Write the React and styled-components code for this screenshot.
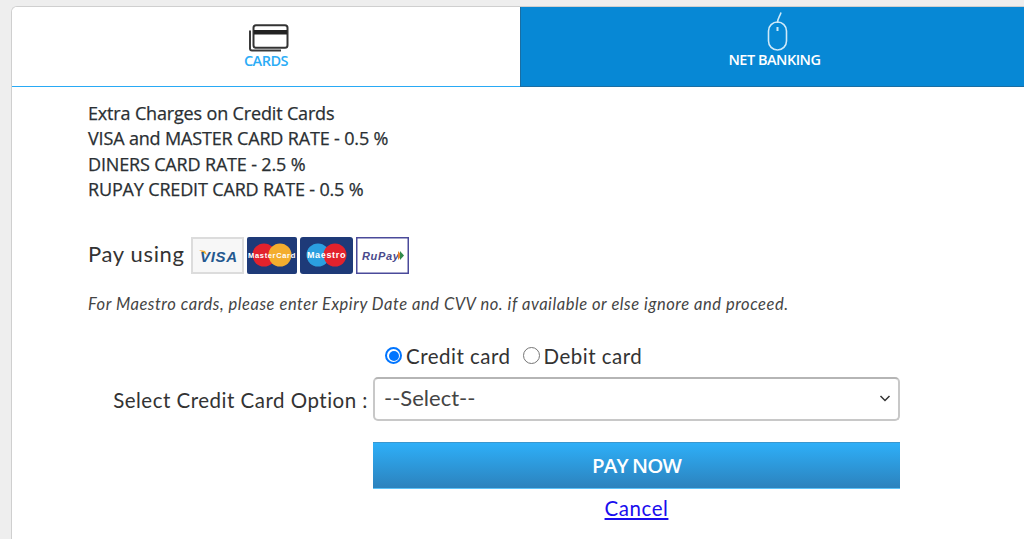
import React from "react";
import styled, { createGlobalStyle } from "styled-components";

const Global = createGlobalStyle`
  html, body { margin: 0; padding: 0; background: #eeeeee; }
  body { height: 539px; overflow: hidden; font-family: "Open Sans", sans-serif; }
`;

const Page = styled.div`
  height: 539px;
  padding: 6px 0 0 11px;
  box-sizing: border-box;
  overflow: hidden;
`;

const Card = styled.div`
  background: #fff;
  border: 1px solid #cfcfcf;
  border-right: 0;
  border-bottom: 0;
  border-top-left-radius: 6px;
  height: 540px;
  overflow: hidden;
`;

const Tabs = styled.div`
  display: grid;
  grid-template-columns: 508px 1fr;
  height: 80px;
`;

const Tab = styled.div`
  display: flex;
  flex-direction: column;
  align-items: center;
  background: ${p => (p.$active ? "#fff" : "#0788d5")};
  color: ${p => (p.$active ? "#2bacf6" : "#fff")};
  border-left: ${p => (p.$active ? "0" : "1px solid #1a6ea3")};
  border-bottom: 1px solid ${p => (p.$active ? "#29aaf5" : "#1a6ea3")};
  font-family: "Open Sans", sans-serif;
  font-weight: 600;
  font-size: 14.5px;
  letter-spacing: -0.5px;
  line-height: 18px;
  height: 80px;
  box-sizing: border-box;
  padding-top: ${p => p.$pad}px;
  padding-left: ${p => (p.$active ? 0 : 4)}px;
`;

const IconSlot = styled.div`
  height: ${p => p.$h}px;
  display: flex;
  align-items: flex-end;
  padding-left: ${p => p.$shift}px;
`;

const Content = styled.div`
  padding: 14px 0 0 76px;
  width: 812px;
`;

const Charges = styled.div`
  font-family: "Open Sans", sans-serif;
  font-weight: 500;
  font-size: 18px;
  line-height: 25.4px;
  color: #2a2f33;
  letter-spacing: -0.16px;
  -webkit-text-stroke: 0.25px #2a2f33;
`;

const PayUsing = styled.div`
  display: flex;
  align-items: center;
  gap: 5px;
  margin-top: 32px;
  height: 37px;
  font-family: "Lato", sans-serif;
  font-size: 22px;
  letter-spacing: 0.65px;
  color: #333;
`;

const Badges = styled.div`
  display: flex;
  gap: 3px;
  margin: 5px 0 0 1px;
`;

const Note = styled.div`
  margin-top: 21px;
  font-family: "Lato", sans-serif;
  font-style: italic;
  font-size: 16.5px;
  letter-spacing: 0.54px;
  line-height: 22px;
  color: #444;
`;

const Form = styled.div`
  display: grid;
  grid-template-columns: 285px 527px;
  margin-top: 28px;
`;

const RadioRow = styled.div`
  grid-column: 2;
  display: flex;
  align-items: center;
  padding-left: 12px;
  height: 26px;
  font-family: "Lato", sans-serif;
  font-size: 20.5px;
  letter-spacing: 0.5px;
  color: #333;
`;

const RadioLabel = styled.label`
  display: flex;
  align-items: center;
  gap: 4px;
  margin-right: 12px;
`;

const Radio = styled.span`
  width: 17px;
  height: 17px;
  box-sizing: border-box;
  border-radius: 50%;
  background: #fff;
  border: ${p => (p.$on ? "2px solid #0075ff" : "1px solid #767676")};
  display: flex;
  align-items: center;
  justify-content: center;
  &::after {
    content: "";
    display: ${p => (p.$on ? "block" : "none")};
    width: 10px;
    height: 10px;
    border-radius: 50%;
    background: #0075ff;
  }
`;

const OptionLabel = styled.div`
  grid-column: 1;
  font-family: "Lato", sans-serif;
  font-size: 20.5px;
  letter-spacing: 0.5px;
  color: #333;
  text-align: right;
  padding: 11px 5px 0 0;
  align-self: center;
`;

const Select = styled.div`
  grid-column: 2;
  height: 44px;
  box-sizing: border-box;
  margin-top: 8px;
  border: 2px solid #c8c8c8;
  border-top-color: #b5b5b5;
  border-radius: 5px;
  display: flex;
  align-items: center;
  justify-content: space-between;
  padding: 0 3px 1px 9px;
  font-family: "Lato", sans-serif;
  font-size: 22px;
  color: #444;
  line-height: 1;
`;

const PayNow = styled.button`
  grid-column: 2;
  display: block;
  width: 100%;
  height: 47px;
  margin-top: 21px;
  border: 0;
  border-top: 1px solid #3a97cf;
  border-bottom: 1px solid #5cc2f8;
  background: linear-gradient(#2eaff8, #2c82bd);
  color: #fff;
  font-family: "Open Sans", sans-serif;
  font-weight: 600;
  font-size: 20.5px;
  letter-spacing: -0.9px;
  padding: 0;
`;

const Cancel = styled.a`
  grid-column: 2;
  justify-self: center;
  margin-top: 5px;
  font-family: "Lato", sans-serif;
  font-size: 20.5px;
  letter-spacing: 0.55px;
  line-height: 28px;
  color: #1a0dee;
  text-decoration: underline;
`;

const CardsIcon = () => (
  <svg width="40" height="28" viewBox="0 0 40 28" fill="none">
    <path d="M1 6.5V24.5a2 2 0 0 0 2 2H32" stroke="#3a3a3a" strokeWidth="2" />
    <rect x="4.5" y="1.2" width="34" height="22.6" rx="2.5" fill="#fff" stroke="#333" strokeWidth="2" />
    <rect x="5" y="6" width="33" height="4.5" fill="#222" />
  </svg>
);

const MouseIcon = () => (
  <svg width="22" height="39" viewBox="0 0 22 39" fill="none" stroke="#cfe9f8" strokeWidth="1.6">
    <path d="M11.5 11C11.5 6 14 4.5 15 0.5" />
    <rect x="2.5" y="10" width="18" height="28" rx="9" />
    <path d="M11.5 15v4" strokeWidth="2" />
  </svg>
);

const VisaBadge = () => (
  <svg width="53" height="37" viewBox="0 0 53 37">
    <rect x="1" y="1" width="51" height="35" fill="#f7f7f7" stroke="#dcdcdc" strokeWidth="2" />
    <path d="M8 13l6 1 2 4z" fill="#f0a92f" />
    <text x="9" y="25" fontFamily="Liberation Sans" fontWeight="700" fontStyle="italic" fontSize="15" fill="#23588f">VISA</text>
  </svg>
);

const MasterBadge = () => (
  <svg width="50" height="37" viewBox="0 0 50 37">
    <rect width="50" height="37" rx="2" fill="#1e3a78" />
    <circle cx="17" cy="18" r="11.5" fill="#e2222c" />
    <circle cx="33" cy="18" r="11.5" fill="#f3ad2e" />
    <text x="25" y="21" textAnchor="middle" fontFamily="Liberation Sans" fontWeight="700" fontSize="7.5" fill="#fff">MasterCard</text>
  </svg>
);

const MaestroBadge = () => (
  <svg width="53" height="37" viewBox="0 0 53 37">
    <rect width="53" height="37" rx="3" fill="#1e3a78" />
    <circle cx="18" cy="18" r="11.5" fill="#2b9fe0" />
    <circle cx="35" cy="18" r="11.5" fill="#e2222c" />
    <text x="26.5" y="21" textAnchor="middle" fontFamily="Liberation Sans" fontWeight="700" fontSize="9" fill="#fff">Maestro</text>
  </svg>
);

const RupayBadge = () => (
  <svg width="53" height="37" viewBox="0 0 53 37">
    <rect x="0.75" y="0.75" width="51.5" height="35.5" fill="#fff" stroke="#4a4a9a" strokeWidth="1.5" />
    <text x="6" y="22.5" fontFamily="Liberation Sans" fontStyle="italic" fontWeight="700" fontSize="11" fill="#4a4a8c">RuPay</text>
    <path d="M42 14l4 4.5-4 4.5z" fill="#e8842c" />
    <path d="M44 14l4 4.5-4 4.5z" fill="#2f8a4a" />
  </svg>
);

const Chevron = () => (
  <svg width="20" height="20" viewBox="0 0 20 20" fill="none" stroke="#333" strokeWidth="1.5">
    <path d="M5.5 8l4.5 4.5L14.5 8" />
  </svg>
);

export default function App() {
  return (
    <>
      <Global />
      <Page>
        <Card>
          <Tabs>
            <Tab $active $pad={15}>
              <IconSlot $h={30} $shift={5}><CardsIcon /></IconSlot>
              CARDS
            </Tab>
            <Tab $pad={4}>
              <IconSlot $h={40} $shift={4}><MouseIcon /></IconSlot>
              NET BANKING
            </Tab>
          </Tabs>
          <Content>
            <Charges>
              <div>Extra Charges on Credit Cards</div>
              <div>VISA and MASTER CARD RATE - 0.5 %</div>
              <div>DINERS CARD RATE - 2.5 %</div>
              <div>RUPAY CREDIT CARD RATE - 0.5 %</div>
            </Charges>
            <PayUsing>
              Pay using
              <Badges>
                <VisaBadge />
                <MasterBadge />
                <MaestroBadge />
                <RupayBadge />
              </Badges>
            </PayUsing>
            <Note>For Maestro cards, please enter Expiry Date and CVV no. if available or else ignore and proceed.</Note>
            <Form>
              <RadioRow>
                <RadioLabel><Radio $on />Credit card</RadioLabel>
                <RadioLabel><Radio />Debit card</RadioLabel>
              </RadioRow>
              <OptionLabel>Select Credit Card Option :</OptionLabel>
              <Select>--Select--<Chevron /></Select>
              <PayNow>PAY NOW</PayNow>
              <Cancel href="#">Cancel</Cancel>
            </Form>
          </Content>
        </Card>
      </Page>
    </>
  );
}
